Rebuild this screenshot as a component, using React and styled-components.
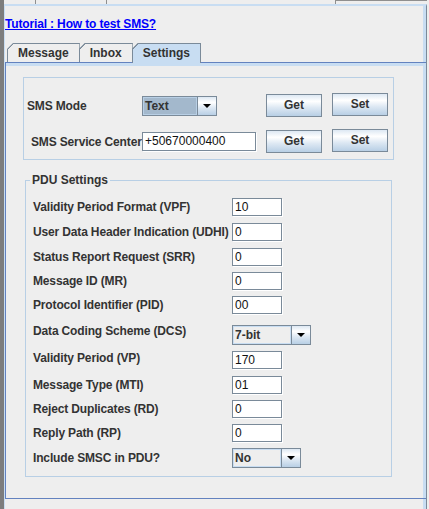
import React from "react";
import styled, { createGlobalStyle } from "styled-components";

const GlobalStyle = createGlobalStyle`
  html, body {
    margin: 0;
    padding: 0;
    background: #eeeeee;
  }
  body {
    font-family: "Liberation Sans", Arial, sans-serif;
    font-size: 12px;
    color: #333333;
  }
`;

// ocean-ish palette
const BORDER = "#7a8a99";
const LIGHT_BLUE = "#c8ddf2";
const GROUP_LINE = "#b8cfe5";
const ACCENT = "#6382bf";
const BUTTON_GRADIENT =
  "linear-gradient(to bottom, #dde8f3 0%, #ffffff 30%, #dde8f3 60%, #b8cfe5 100%)";

const pduRows = [
  { label: "Validity Period Format (VPF)", value: "10", gap: 0 },
  { label: "User Data Header Indication (UDHI)", value: "0", gap: 7 },
  { label: "Status Report Request (SRR)", value: "0", gap: 7 },
  { label: "Message ID (MR)", value: "0", gap: 6 },
  { label: "Protocol Identifier (PID)", value: "00", gap: 6 },
  { label: "Data Coding Scheme (DCS)", combo: "7-bit", width: 79, gap: 10, raise: 4 },
  { label: "Validity Period (VP)", value: "170", gap: 5, raise: 2 },
  { label: "Message Type (MTI)", value: "01", gap: 7 },
  { label: "Reject Duplicates (RD)", value: "0", gap: 6 },
  { label: "Reply Path (RP)", value: "0", gap: 6 },
  { label: "Include SMSC in PDU?", combo: "No", width: 69, gap: 6 },
];

const tabs = ["Message", "Inbox", "Settings"];

const App = () => {
  return (
    <>
      <GlobalStyle />
      <Window>
        <SideStrip />
        <Main>
          <HeaderStub>
            <StubCell $w={32} $edge />
            <StubCell $w={71} $edge />
            <StubCell $w={229} $edge />
            <StubCell $w={91} $top />
          </HeaderStub>
          <Pane>
            <TutorialLink href="#">Tutorial : How to test SMS?</TutorialLink>
            <TabStrip>
              {tabs.map((tab) => (
                <Tab key={tab} $selected={tab === "Settings"}>
                  {tab}
                </Tab>
              ))}
            </TabStrip>
            <TabBody>
              <ModeBox>
                <FormLabel $indent={3}>SMS Mode</FormLabel>
                <Combo value="Text" width={75} focused />
                <Button>Get</Button>
                <Button $lift>Set</Button>
                <FormLabel $indent={7}>SMS Service Center</FormLabel>
                <TextField $w={114} $h={19}>
                  +50670000400
                </TextField>
                <Button>Get</Button>
                <Button $lift>Set</Button>
              </ModeBox>
              <PduGroup>
                <PduLegend>PDU Settings</PduLegend>
                {pduRows.map((row) => (
                  <PduRow key={row.label} $gap={row.gap}>
                    <PduLabel $raise={row.raise || 0}>{row.label}</PduLabel>
                    {row.combo ? (
                      <Combo value={row.combo} width={row.width} />
                    ) : (
                      <TextField $w={50} $h={18}>
                        {row.value}
                      </TextField>
                    )}
                  </PduRow>
                ))}
              </PduGroup>
            </TabBody>
          </Pane>
        </Main>
      </Window>
    </>
  );
};

//Combo Component
const Combo = ({ value, width, focused }) => {
  return (
    <ComboBox $w={width}>
      <ComboValue $focused={focused}>{value}</ComboValue>
      <ComboArrow>
        <svg width="8" height="4" viewBox="0 0 8 4">
          <polygon points="0,0 8,0 4,4" fill="#000" />
        </svg>
      </ComboArrow>
    </ComboBox>
  );
};

//styling
const Window = styled.div`
  display: flex;
  width: 429px;
  height: 509px;
  overflow: hidden;
  background: #eeeeee;
`;
const SideStrip = styled.div`
  flex: none;
  width: 4px;
  background: #7d7d7d;
`;
const Main = styled.div`
  flex: none;
  width: 423px;
  display: flex;
  flex-direction: column;
`;
const HeaderStub = styled.div`
  display: flex;
  height: 4px;
`;
const StubCell = styled.div`
  flex: none;
  box-sizing: border-box;
  width: ${(p) => p.$w}px;
  border-right: ${(p) => (p.$edge ? "1px solid #8f8f8f" : "none")};
  border-top: ${(p) => (p.$top ? "1px solid #8f8f8f" : "none")};
`;
const Pane = styled.div`
  flex: 1;
  display: flex;
  flex-direction: column;
  align-items: flex-start;
  border-top: 2px solid ${LIGHT_BLUE};
  border-left: 1px solid ${LIGHT_BLUE};
  border-right: 1px solid ${BORDER};
  box-shadow: inset -3px 0 0 ${LIGHT_BLUE};
`;
const TutorialLink = styled.a`
  margin-top: 11px;
  font-weight: bold;
  font-size: 12px;
  line-height: 14px;
  letter-spacing: -0.15px;
  color: #0000ff;
  text-decoration: underline;
`;
const TabStrip = styled.div`
  display: flex;
  align-items: flex-start;
  height: 19px;
  margin-top: 12px;
  padding-left: 2px;
`;
const Tab = styled.div`
  position: relative;
  z-index: 1;
  box-sizing: border-box;
  height: ${(p) => (p.$selected ? 20 : 19)}px;
  margin-left: -1px;
  padding: 0 10px;
  border: 1px solid ${BORDER};
  border-bottom: none;
  font-weight: bold;
  font-size: 12px;
  line-height: 18px;
  color: #333333;
  background: linear-gradient(
    135deg,
    transparent 4.2px,
    ${BORDER} 4.2px,
    ${BORDER} 5.3px,
    ${(p) => (p.$selected ? LIGHT_BLUE : "#eeeeee")} 5.3px
  );
  background-origin: border-box;
  clip-path: polygon(6px 0, 100% 0, 100% 100%, 0 100%, 0 6px);
  &:first-child {
    margin-left: 0;
  }
`;
const TabBody = styled.div`
  box-sizing: border-box;
  align-self: stretch;
  height: 437px;
  padding: 14px 0 0 17px;
  border: 1px solid ${ACCENT};
  border-right: none;
  box-shadow: inset 0 3px 0 ${LIGHT_BLUE}, inset -3px 0 0 ${LIGHT_BLUE};
`;
const ModeBox = styled.div`
  box-sizing: border-box;
  width: 371px;
  padding: 16px 0 6px 0;
  border: 1px solid ${GROUP_LINE};
  display: grid;
  grid-template-columns: 118px 124px 66px 56px;
  grid-template-rows: 23px 23px;
  row-gap: 13px;
  align-items: center;
`;
const FormLabel = styled.div`
  padding-left: ${(p) => p.$indent}px;
  white-space: nowrap;
  font-weight: bold;
  font-size: 12px;
  line-height: 14px;
  letter-spacing: -0.15px;
  color: #333333;
`;
const Button = styled.div`
  box-sizing: border-box;
  width: 56px;
  height: 23px;
  margin-bottom: ${(p) => (p.$lift ? 2 : 0)}px;
  border: 1px solid ${BORDER};
  background: ${BUTTON_GRADIENT};
  font-weight: bold;
  font-size: 12px;
  line-height: 21px;
  text-align: center;
  color: #333333;
`;
const TextField = styled.div`
  position: relative;
  z-index: 1;
  box-sizing: border-box;
  width: ${(p) => p.$w}px;
  height: ${(p) => p.$h}px;
  padding: 0 2px;
  border: 1px solid ${BORDER};
  background: #ffffff;
  box-shadow: 1px 1px 0 #ffffff;
  font-size: 12px;
  line-height: ${(p) => p.$h - 2}px;
  color: #111111;
  white-space: nowrap;
  overflow: hidden;
`;
const ComboBox = styled.div`
  box-sizing: border-box;
  display: flex;
  width: ${(p) => p.$w}px;
  height: 20px;
  border: 1px solid ${BORDER};
`;
const ComboValue = styled.div`
  flex: 1;
  padding-left: 2px;
  background: ${(p) => (p.$focused ? "#a3b8cc" : "#eeeeee")};
  box-shadow: inset 0 0 0 1px ${(p) => (p.$focused ? GROUP_LINE : LIGHT_BLUE)};
  font-weight: bold;
  font-size: 12px;
  line-height: 18px;
  color: #333333;
`;
const ComboArrow = styled.div`
  box-sizing: border-box;
  flex: none;
  width: 19px;
  display: flex;
  align-items: center;
  justify-content: center;
  border-left: 1px solid ${BORDER};
  background: ${BUTTON_GRADIENT};
`;
const PduGroup = styled.fieldset`
  box-sizing: border-box;
  width: 367px;
  min-width: 0;
  margin: 13px 0 0 2px;
  padding: 11px 0 8px 7px;
  border: 1px solid ${GROUP_LINE};
`;
const PduLegend = styled.legend`
  margin-left: -3px;
  padding: 0 2px;
  font-weight: bold;
  font-size: 12px;
  line-height: 14px;
  color: #333333;
`;
const PduRow = styled.div`
  display: flex;
  align-items: center;
  margin-top: ${(p) => p.$gap}px;
`;
const PduLabel = styled.div`
  flex: none;
  width: 199px;
  padding-bottom: ${(p) => p.$raise * 2}px;
  white-space: nowrap;
  font-weight: bold;
  font-size: 12px;
  line-height: 14px;
  letter-spacing: -0.15px;
  color: #333333;
`;

export default App;
